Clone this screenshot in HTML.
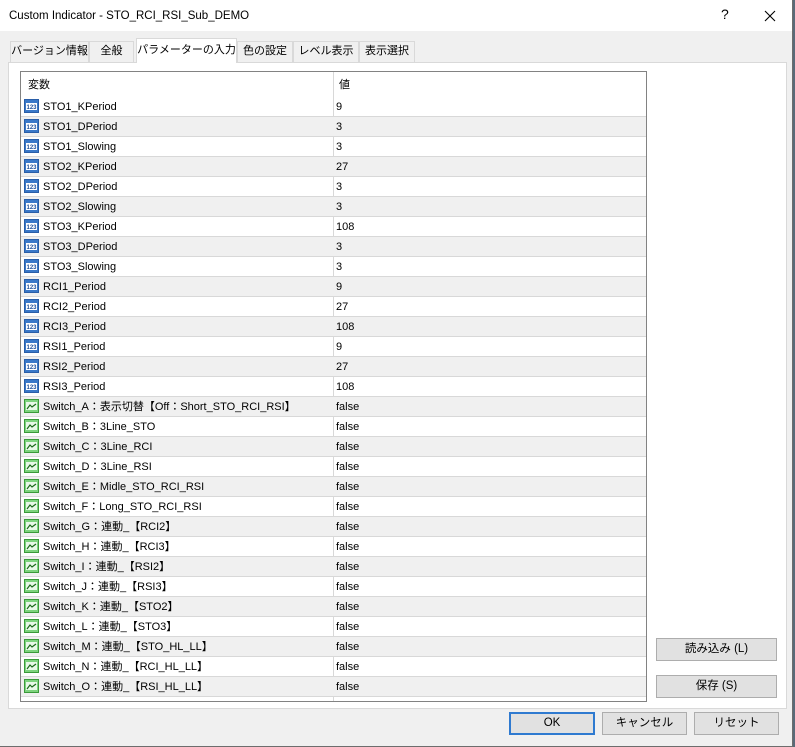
<!DOCTYPE html>
<html><head><meta charset="utf-8"><style>
*{margin:0;padding:0;box-sizing:border-box}
body{width:795px;height:747px;background:#5a6a78;font-family:"Liberation Sans","Noto Sans CJK JP",sans-serif;font-size:11px;color:#000;position:relative;overflow:hidden;line-height:14px}
.win{position:absolute;left:0;top:0;width:793px;height:747px;background:#f0f0f0;border-right:1px solid #6d6d6d;border-bottom:1px solid #6d6d6d}
.title{position:absolute;left:0;top:0;width:792px;height:31px;background:#fff}
.title span{position:absolute;left:9px;top:9px;font-size:11.5px;white-space:nowrap}
.abs{position:absolute;white-space:nowrap}
.tab{position:absolute;top:41px;height:21px;border:1px solid #d9d9d9;border-bottom:none;background:#f0f0f0;text-align:center;line-height:19px;font-size:11px;white-space:nowrap;overflow:hidden}
.tab.act{top:38px;height:25px;background:#fff;z-index:2;line-height:22px}
.panel{position:absolute;left:8px;top:62px;width:779px;height:647px;background:#fff;border:1px solid #d9d9d9}
.tbl{position:absolute;left:20px;top:71px;width:627px;height:631px;border:1px solid #828282;background:#fff;overflow:hidden}
.row{position:absolute;left:0;width:625px;height:20px;border-bottom:1px solid #d8d8d8}
.row.g{background:#f0f0f0}
.row .n{position:absolute;left:22px;top:3px;white-space:nowrap;height:14px;line-height:14px}
.row .v{position:absolute;left:315px;top:3px}
.row .ic{position:absolute;left:3px;top:2px}
.vl{position:absolute;left:312px;top:0;width:1px;height:629px;background:#d8d8d8}
.btn{position:absolute;height:23px;border:1px solid #adadad;background:#e1e1e1;text-align:center;line-height:21px;font-size:11.5px;white-space:nowrap}
</style></head><body>
<div class="win">
<div class="title"><span>Custom Indicator - STO_RCI_RSI_Sub_DEMO</span>
<span style="left:721px;top:7px;font-size:14px">?</span>
<svg class="abs" style="left:764px;top:10px" width="12" height="12"><path d="M1 1L11 11M11 1L1 11" stroke="#000" stroke-width="1.1"/></svg></div>
<div class="tab" style="left:10px;width:79px">バージョン情報</div>
<div class="tab" style="left:89px;width:45px">全般</div>
<div class="tab act" style="left:136px;width:101px">パラメーターの入力</div>
<div class="tab" style="left:237px;width:56px">色の設定</div>
<div class="tab" style="left:293px;width:66px">レベル表示</div>
<div class="tab" style="left:359px;width:56px">表示選択</div>
<div class="panel"></div>
<div class="tbl">
<div class="vl"></div>
<div class="abs" style="left:7px;top:6px">変数</div>
<div class="abs" style="left:318px;top:6px">値</div>
<div id="rows"></div>
</div>
<div class="btn" style="left:656px;top:638px;width:121px">読み込み (L)</div>
<div class="btn" style="left:656px;top:675px;width:121px">保存 (S)</div>
<div class="btn" style="left:509px;top:712px;width:86px;border:2px solid #2f7ad0;line-height:19px">OK</div>
<div class="btn" style="left:602px;top:712px;width:85px">キャンセル</div>
<div class="btn" style="left:694px;top:712px;width:85px">リセット</div>
</div>
<script>
var d=[["STO1_KPeriod","9"],["STO1_DPeriod","3"],["STO1_Slowing","3"],["STO2_KPeriod","27"],["STO2_DPeriod","3"],["STO2_Slowing","3"],["STO3_KPeriod","108"],["STO3_DPeriod","3"],["STO3_Slowing","3"],["RCI1_Period","9"],["RCI2_Period","27"],["RCI3_Period","108"],["RSI1_Period","9"],["RSI2_Period","27"],["RSI3_Period","108"],
["Switch_A：表示切替【Off：Short_STO_RCI_RSI】","false"],["Switch_B：3Line_STO","false"],["Switch_C：3Line_RCI","false"],["Switch_D：3Line_RSI","false"],["Switch_E：Midle_STO_RCI_RSI","false"],["Switch_F：Long_STO_RCI_RSI","false"],["Switch_G：連動_【RCI2】","false"],["Switch_H：連動_【RCI3】","false"],["Switch_I：連動_【RSI2】","false"],["Switch_J：連動_【RSI3】","false"],["Switch_K：連動_【STO2】","false"],["Switch_L：連動_【STO3】","false"],["Switch_M：連動_【STO_HL_LL】","false"],["Switch_N：連動_【RCI_HL_LL】","false"],["Switch_O：連動_【RSI_HL_LL】","false"]];
var ic1='<svg class="ic" width="15" height="15"><rect x="0.5" y="0.5" width="14" height="13" fill="#3a78c8" stroke="#2a5ea8"/><rect x="2" y="4" width="11" height="7" fill="#fff"/><text x="7.5" y="10" font-size="6" font-family="Liberation Sans" text-anchor="middle" fill="#1f4f9a" font-weight="bold">123</text></svg>';
var ic2='<svg class="ic" width="15" height="15"><rect x="0.5" y="0.5" width="14" height="13" fill="#7ed37e" stroke="#3a9a3a"/><rect x="2" y="3" width="11" height="8" fill="#e8f8e8"/><path d="M3 10L6 6L8 8L12 5" stroke="#1a6a1a" stroke-width="1.2" fill="none"/></svg>';
var h='';
for(var i=0;i<d.length;i++){h+='<div class="row'+(i%2?' g':'')+'" style="top:'+(25+i*20)+'px">'+(i<15?ic1:ic2)+'<span class="n">'+d[i][0]+'</span><span class="v">'+d[i][1]+'</span></div>';}
document.getElementById('rows').innerHTML=h;
</script>
</body></html>
